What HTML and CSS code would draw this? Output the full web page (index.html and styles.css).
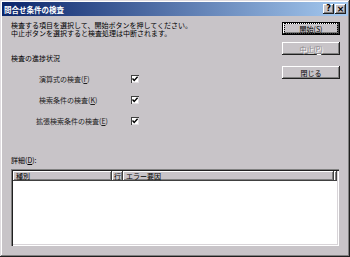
FILE: index.html
```html
<!DOCTYPE html>
<html lang="ja">

<head>
  <meta charset="UTF-8">
  <title>問合せ条件の検査</title>
  <link rel="stylesheet" href="styles.css">
</head>

<body>
  <div class="window">
    <div class="titlebar">
      <span class="title">問合せ条件の検査</span>
      <div class="caption-buttons">
        <span class="cap-btn">?</span>
        <span class="cap-btn close">×</span>
      </div>
    </div>

    <div class="content">
      <div class="top">
        <div class="left">
          <p class="intro">検査する項目を選択して、開始ボタンを押してください。<br>中止ボタンを選択すると検査処理は中断されます。</p>
          <p class="section">検査の進捗状況</p>
          <ul class="checks">
            <li><span class="label">演算式の検査(<u>F</u>)</span><span class="checkbox"><svg viewBox="0 0 8 8"><path d="M1.5 3.5 L3.2 5.4 L6.6 1.8" /></svg></span></li>
            <li><span class="label">検索条件の検査(<u>K</u>)</span><span class="checkbox"><svg viewBox="0 0 8 8"><path d="M1.5 3.5 L3.2 5.4 L6.6 1.8" /></svg></span></li>
            <li><span class="label wide">拡張検索条件の検査(<u>E</u>)</span><span class="checkbox"><svg viewBox="0 0 8 8"><path d="M1.5 3.5 L3.2 5.4 L6.6 1.8" /></svg></span></li>
          </ul>
        </div>
        <div class="buttons">
          <button class="btn default"><span class="focus">開始(<u>S</u>)</span></button>
          <button class="btn disabled">中止(<u>P</u>)</button>
          <button class="btn">閉じる</button>
        </div>
      </div>

      <p class="detail-label">詳細(<u>D</u>):</p>
      <div class="listview">
        <div class="list-header">
          <span class="col col-type">種別</span>
          <span class="col col-line">行</span>
          <span class="col col-error">エラー要因</span>
          <span class="col col-fill"></span>
        </div>
      </div>
    </div>
  </div>
</body>

</html>
```

FILE: styles.css
```css
/* Win2000 style dialog */
* {
  box-sizing: border-box;
  margin: 0;
  padding: 0;
}

body {
  background: #c8c4c8;
  font-family: "Noto Sans CJK JP", "DejaVu Sans", sans-serif;
  font-size: 7px;
  line-height: 8px;
  color: #000;
}

.window {
  width: 350px;
  height: 257px;
  padding: 2px;
  background: #c8c4c8;
  box-shadow: inset -1px -1px 0 #202020, inset 1px 1px 0 #e0dce0, inset -2px -2px 0 #808080, inset 2px 2px 0 #fff;
  display: flex;
  flex-direction: column;
}

/* Title bar */
.titlebar {
  height: 14px;
  display: flex;
  align-items: center;
  justify-content: space-between;
  padding: 0 2px 0 2px;
  background: linear-gradient(to right, #0a246a, #a6caf0);
}

.title {
  color: #fff;
  font-size: 7.5px;
  font-weight: bold;
  line-height: 9px;
}

.caption-buttons {
  display: flex;
  gap: 1px;
}

.cap-btn {
  width: 11px;
  height: 10px;
  background: #c8c4c8;
  box-shadow: inset -1px -1px 0 #202020, inset 1px 1px 0 #fff, inset -2px -2px 0 #808080;
  font-family: "DejaVu Sans", sans-serif;
  font-size: 8px;
  font-weight: bold;
  line-height: 10px;
  text-align: center;
}

.cap-btn.close {
  font-size: 9px;
}

/* Dialog content */
.content {
  flex: 1;
  padding: 5px 8px 0 9px;
  display: flex;
  flex-direction: column;
}

.top {
  display: flex;
  justify-content: space-between;
}

.section {
  margin-top: 17px;
}

.checks {
  list-style: none;
  margin-top: 6px;
}

.checks li {
  height: 21px;
  display: flex;
  align-items: center;
  padding-left: 28px;
}

.label {
  width: 92px;
  color: #202020;
}

.label.wide {
  margin-left: -3px;
  width: 95px;
}

.checkbox {
  width: 8px;
  height: 8px;
  background: #fff;
  box-shadow: inset 1px 1px 0 #404040, inset -1px -1px 0 #e0dce0;
  display: flex;
}

.checkbox svg {
  width: 8px;
  height: 8px;
  fill: none;
  stroke: #000;
  stroke-width: 1.4;
}

/* Command buttons */
.buttons {
  width: 58px;
  display: flex;
  flex-direction: column;
  padding-top: 1px;
}

.btn {
  height: 13px;
  border: none;
  background: #c8c4c8;
  font-family: inherit;
  font-size: 7px;
  line-height: 8px;
  color: #000;
  box-shadow: inset -1px -1px 0 #202020, inset 1px 1px 0 #fff, inset -2px -2px 0 #808080;
  display: flex;
  align-items: center;
  justify-content: center;
}

.btn.default {
  box-shadow: inset 0 0 0 1px #000, inset -2px -2px 0 #404040, inset 2px 2px 0 #fff, inset -3px -3px 0 #808080;
}

.btn.default .focus {
  width: 52px;
  height: 9px;
  outline: 1px dotted #000;
  display: flex;
  align-items: center;
  justify-content: center;
}

.btn.disabled {
  margin-top: 7px;
  color: #8c888c;
  text-shadow: 1px 1px 0 #fff;
}

.btn:last-child {
  margin-top: 11px;
}

/* Details list */
.detail-label {
  margin-top: 25px;
}

.listview {
  margin-top: 5px;
  margin-right: 1px;
  height: 77px;
  background: #fff;
  padding: 2px;
  box-shadow: inset 1px 1px 0 #808080, inset 2px 2px 0 #202020, inset -1px -1px 0 #fff, inset -2px -2px 0 #d8d4d8;
}

.list-header {
  display: flex;
  height: 10px;
}

.col {
  background: #c8c4c8;
  box-shadow: inset -1px -1px 0 #404040, inset 1px 1px 0 #fff, inset -2px -2px 0 #808080;
  padding: 1px 0 0 3px;
  line-height: 8px;
}

.col-type {
  width: 99px;
}

.col-line {
  width: 11px;
  padding-left: 2px;
}

.col-error {
  width: 211px;
}

.col-fill {
  flex: 1;
}
```
